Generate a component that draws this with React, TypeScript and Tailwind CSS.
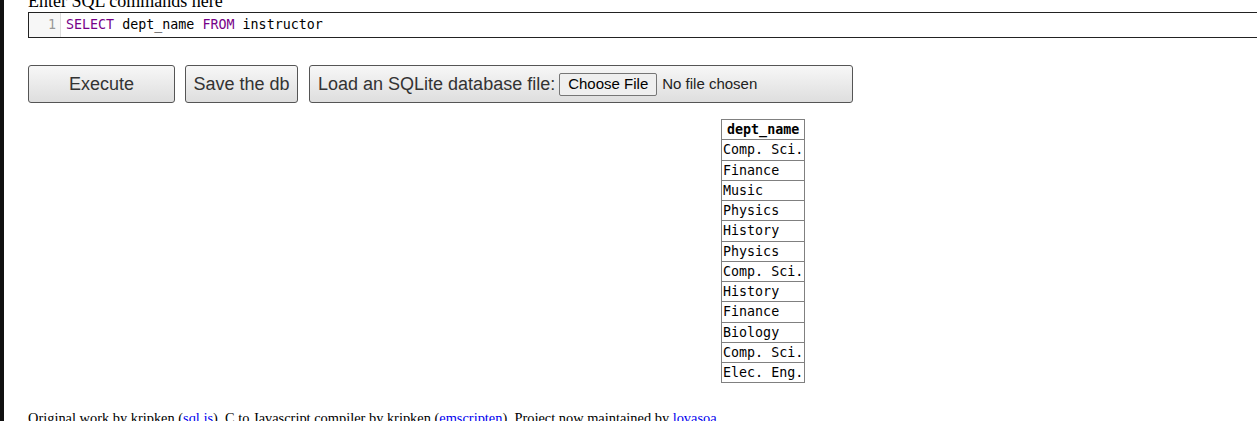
const rows = [
  'Comp. Sci.', 'Finance', 'Music', 'Physics', 'History', 'Physics',
  'Comp. Sci.', 'History', 'Finance', 'Biology', 'Comp. Sci.', 'Elec. Eng.',
];

const btn =
  'h-[38px] rounded-[3px] border border-[#555] bg-gradient-to-b from-[#f7f7f7] to-[#dedede] text-[18px] text-[#333] flex items-center';

export default function App() {
  return (
    <div className="flex h-[421px] overflow-hidden bg-white">
      <div className="w-[4px] shrink-0 bg-[#111]" />
      <div className="flex-1 pl-[24px] flex flex-col overflow-hidden">
        {/* title, scrolled half out of view */}
        <div className="h-[12px] shrink-0 overflow-visible">
          <div className="-mt-[9px] font-['Liberation_Serif',serif] text-[18px] leading-[20px] text-black whitespace-nowrap">
            Enter SQL commands here
          </div>
        </div>

        {/* editor */}
        <div className="flex h-[26px] w-[1260px] shrink-0 border border-[#222] bg-white font-['DejaVu_Sans_Mono',monospace] text-[13.333px]">
          <div className="w-[32px] shrink-0 border-r border-[#ddd] bg-[#f7f7f7] pr-[4px] text-right leading-[24px] text-[#999]">1</div>
          <div className="pl-[5px] leading-[24px] text-black whitespace-pre">
            <span className="text-[#770088]">SELECT</span> dept_name <span className="text-[#770088]">FROM</span> instructor
          </div>
        </div>

        {/* actions */}
        <div className="mt-[27px] flex shrink-0 gap-[10px] font-['Liberation_Sans',Arial,sans-serif]">
          <button className={`${btn} w-[147px] justify-center`}>Execute</button>
          <button className={`${btn} w-[113px] justify-center`}>Save the db</button>
          <label className={`${btn} w-[544px] pl-[8px] ml-[1px]`}>
            <span>Load an SQLite database file:</span>
            <span className="ml-[4px] flex h-[23px] items-center rounded-[2px] border border-[#767676] bg-[#efefef] px-[8px] text-[15px] text-black">
              Choose File
            </span>
            <span className="ml-[5px] text-[15px] text-[#222]">No file chosen</span>
          </label>
        </div>

        {/* result */}
        <div className="mt-[16px] ml-[693px] shrink-0">
          <table className="border-collapse font-['DejaVu_Sans_Mono',monospace] text-[13.333px] text-black">
            <thead>
              <tr>
                <th className="border border-[#808080] px-[1px] py-[1px] leading-[17.25px] font-bold">dept_name</th>
              </tr>
            </thead>
            <tbody>
              {rows.map((r, i) => (
                <tr key={i}>
                  <td className="border border-[#808080] px-[1px] py-[1px] leading-[17.25px] whitespace-pre">{r}</td>
                </tr>
              ))}
            </tbody>
          </table>
        </div>

        <p className="mt-[26px] shrink-0 font-['Liberation_Serif',serif] text-[14.4px] leading-[18px] text-black whitespace-nowrap">
          Original work by kripken (<a className="text-[#0000ee]">sql.js</a>). C to Javascript compiler by kripken (
          <a className="text-[#0000ee]">emscripten</a>). Project now maintained by <a className="text-[#0000ee]">lovasoa</a>
        </p>
      </div>
    </div>
  );
}
